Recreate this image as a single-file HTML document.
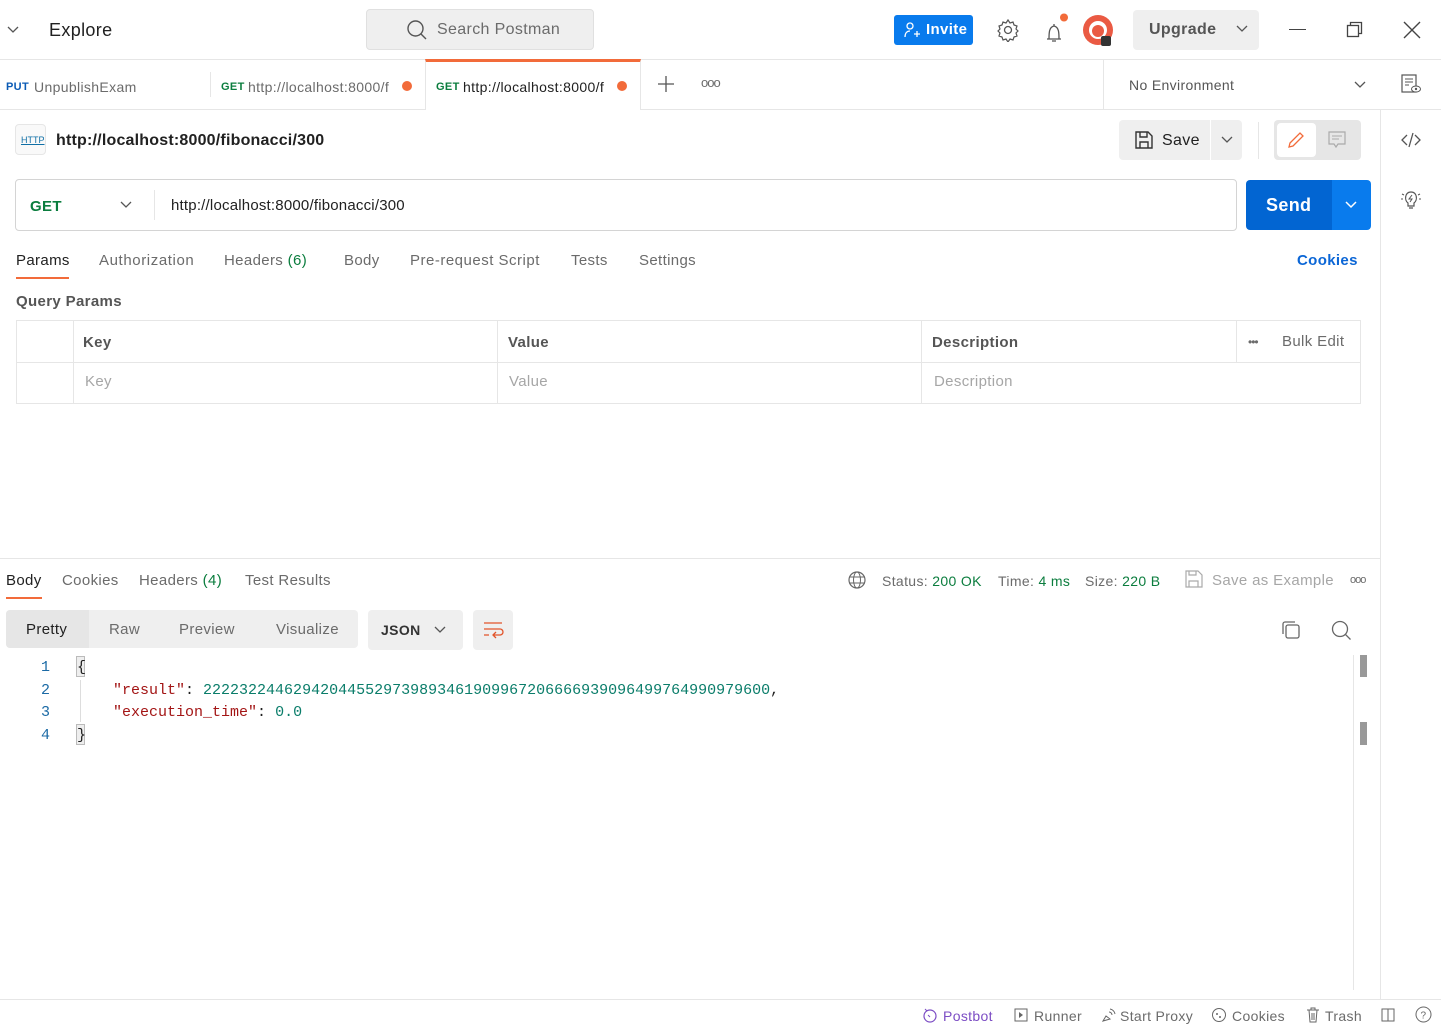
<!DOCTYPE html>
<html><head><meta charset="utf-8"><style>
*{box-sizing:border-box;margin:0;padding:0}
body{width:1441px;height:1030px;position:relative;overflow:hidden;background:#fff;font-family:"Liberation Sans",sans-serif;color:#212121;font-size:14px}
.a{position:absolute;white-space:nowrap;letter-spacing:0.35px;margin-top:1px}
.g{color:#6b6b6b}
.hl{position:absolute;height:1px;background:#e6e6e6}
.vl{position:absolute;width:1px;background:#e6e6e6}
svg{position:absolute}
.mono{font-family:"Liberation Mono",monospace;font-size:15px;letter-spacing:0}
</style></head><body>
<!-- top bar -->
<svg style="left:6px;top:24px" width="14" height="10"><path d="M2 3l5 5 5-5" stroke="#555" fill="none" stroke-width="1.3"/></svg>
<div class="a" style="left:49px;top:19px;font-size:18px;color:#212121">Explore</div>
<div class="a" style="left:366px;top:9px;width:228px;height:41px;background:#efefef;border:1px solid #e0e0e0;border-radius:4px;margin-top:0"></div>
<svg style="left:406px;top:19px" width="22" height="22"><circle cx="9.5" cy="9.5" r="7.5" stroke="#555" fill="none" stroke-width="1.4"/><path d="M15 15l5 5" stroke="#555" stroke-width="1.4"/></svg>
<div class="a g" style="left:437px;top:20px;font-size:16px">Search Postman</div>
<div class="a" style="left:894px;top:15px;width:79px;height:30px;background:#097bed;border-radius:3px;color:#fff;font-weight:bold;font-size:15px;padding:6px 0 0 32px;margin-top:0">Invite</div>
<svg style="left:903px;top:21px" width="18" height="18"><circle cx="7" cy="5" r="3" stroke="#fff" fill="none" stroke-width="1.3"/><path d="M2 16c0-4 2-6 5-6M11 13h6M14 10v6" stroke="#fff" fill="none" stroke-width="1.3"/></svg>
<svg style="left:996px;top:18px" width="24" height="24"><circle cx="12" cy="12" r="3.5" stroke="#555" fill="none" stroke-width="1.3"/><path d="M12 2l2 3 3-1 1 3 3 1-1 3 2 2-2 2 1 3-3 1-1 3-3-1-2 3-2-3-3 1-1-3-3-1 1-3-2-2 2-2-1-3 3-1 1-3 3 1z" stroke="#555" fill="none" stroke-width="1.2"/></svg>
<svg style="left:1042px;top:12px" width="30" height="30"><path d="M5 27h14M7 27c0-6 0-12 5-13 5 1 5 7 5 13M12 14v-2M10 29h4" stroke="#555" fill="none" stroke-width="1.3"/><circle cx="22" cy="5.5" r="4" fill="#f26b3a"/></svg>
<svg style="left:1082px;top:14px" width="32" height="32"><circle cx="16" cy="16" r="15" fill="#ea5a43"/><circle cx="16" cy="16" r="9" fill="#fff"/><circle cx="16" cy="17" r="6" fill="#ea5a43"/><rect x="19" y="22" width="10" height="10" rx="2" fill="#333"/></svg>
<div class="a" style="left:1133px;top:10px;width:126px;height:40px;background:#efefef;border-radius:4px;margin-top:0"></div>
<div class="a" style="left:1149px;top:20px;font-size:16px;font-weight:bold;color:#555">Upgrade</div>
<svg style="left:1235px;top:24px" width="14" height="10"><path d="M2 2l5 5 5-5" stroke="#555" fill="none" stroke-width="1.3"/></svg>
<div class="a" style="left:1289px;top:29px;width:17px;height:1px;background:#444;margin-top:0"></div>
<svg style="left:1346px;top:21px" width="18" height="18"><rect x="1.5" y="4.5" width="11" height="11" stroke="#444" fill="none" stroke-width="1.3"/><path d="M4.5 4.5v-3h11v11h-3" stroke="#444" fill="none" stroke-width="1.3"/></svg>
<svg style="left:1402px;top:20px" width="20" height="20"><path d="M2 2l16 16M18 2L2 18" stroke="#444" stroke-width="1.4"/></svg>
<div class="hl" style="left:0;top:59px;width:1441px"></div>
<!-- tabs -->
<div class="a" style="left:6px;top:80px;font-size:11px;font-weight:bold;color:#0b5bb5">PUT</div>
<div class="a g" style="left:34px;top:78px;font-size:14px">UnpublishExam</div>
<div class="vl" style="left:210px;top:72px;height:25px"></div>
<div class="a" style="left:221px;top:80px;font-size:11px;font-weight:bold;color:#0b7d3e">GET</div>
<div class="a g" style="left:248px;top:78px;font-size:14px">http://localhost:8000/f</div>
<div class="a" style="left:402px;top:81px;width:10px;height:10px;border-radius:5px;background:#f26b3a;margin-top:0"></div>
<div class="a" style="left:425px;top:59px;width:216px;height:51px;background:#fff;border-left:1px solid #e6e6e6;border-right:1px solid #e6e6e6;border-top:3px solid #f26b3a;z-index:1;margin-top:0"></div>
<div class="a" style="left:436px;top:80px;font-size:11px;font-weight:bold;color:#0b7d3e;z-index:2">GET</div>
<div class="a" style="left:463px;top:78px;font-size:14px;z-index:2">http://localhost:8000/f</div>
<div class="a" style="left:617px;top:81px;width:10px;height:10px;border-radius:5px;background:#f26b3a;z-index:2;margin-top:0"></div>
<svg style="left:656px;top:74px" width="20" height="20"><path d="M10 2v16M2 10h16" stroke="#555" stroke-width="1.3"/></svg>
<div class="a g" style="left:701px;top:74px;font-size:13px;letter-spacing:-1px">ooo</div>
<div class="vl" style="left:1103px;top:60px;height:50px"></div>
<div class="a" style="left:1129px;top:76px;font-size:14px;color:#555">No Environment</div>
<svg style="left:1353px;top:80px" width="14" height="10"><path d="M2 2l5 5 5-5" stroke="#555" fill="none" stroke-width="1.3"/></svg>
<svg style="left:1400px;top:73px" width="22" height="22"><rect x="2" y="2" width="14" height="17" stroke="#555" fill="none" stroke-width="1.2"/><path d="M5 6h8M5 9h8M5 12h4" stroke="#555"/><ellipse cx="16" cy="16" rx="4.5" ry="3" fill="#fff" stroke="#555"/><circle cx="16" cy="16" r="1.2" fill="#555"/></svg>
<div class="hl" style="left:0;top:109px;width:1441px"></div>
<div class="vl" style="left:1380px;top:110px;height:889px"></div>
<!-- request title -->
<div class="a" style="left:15px;top:124px;width:31px;height:31px;border:1px solid #e6e6e6;border-radius:4px;background:#f9f9f9;margin-top:0"></div>
<div class="a" style="left:21px;top:134px;font-size:9px;color:#0f6fa6;text-decoration:underline;letter-spacing:0">HTTP</div>
<div class="a" style="left:56px;top:131px;font-size:16px;font-weight:bold;letter-spacing:0.2px">http://localhost:8000/fibonacci/300</div>
<div class="a" style="left:1119px;top:120px;width:91px;height:40px;background:#efefef;border-radius:4px 0 0 4px;margin-top:0"></div>
<div class="a" style="left:1211px;top:120px;width:31px;height:40px;background:#efefef;border-radius:0 4px 4px 0;margin-top:0"></div>
<svg style="left:1133px;top:129px" width="22" height="22"><path d="M3 3h12l4 4v12H3z" stroke="#333" fill="none" stroke-width="1.4"/><path d="M7 3v5h7V3M7 19v-6h8v6" stroke="#333" fill="none" stroke-width="1.4"/></svg>
<div class="a" style="left:1162px;top:131px;font-size:16px">Save</div>
<svg style="left:1220px;top:135px" width="14" height="10"><path d="M2 2l5 5 5-5" stroke="#555" fill="none" stroke-width="1.3"/></svg>
<div class="vl" style="left:1258px;top:122px;height:37px"></div>
<div class="a" style="left:1274px;top:120px;width:87px;height:40px;background:#e6e6e6;border-radius:4px;margin-top:0"></div>
<div class="a" style="left:1277px;top:123px;width:39px;height:34px;background:#fff;border-radius:4px;margin-top:0"></div>
<svg style="left:1286px;top:130px" width="20" height="20"><path d="M3 17l1-4L14 3l3 3L7 16z" stroke="#f26b3a" fill="none" stroke-width="1.3"/></svg>
<svg style="left:1327px;top:130px" width="20" height="20"><path d="M2 2h16v12h-7l-2 3-2-3H2z" stroke="#aaa" fill="none" stroke-width="1.2"/><path d="M5 6h10M5 9h7" stroke="#aaa"/></svg>
<svg style="left:1400px;top:130px" width="22" height="20"><path d="M7 5l-5 5 5 5M15 5l5 5-5 5M13 3l-4 14" stroke="#555" fill="none" stroke-width="1.3"/></svg>
<svg style="left:1399px;top:187px" width="24" height="24"><path d="M9 16c-4-3-3-11 3-11s7 8 3 11v3H9zM10 21h4" stroke="#555" fill="none" stroke-width="1.2"/><path d="M13 8l-3 4h3l-2 3" stroke="#555" fill="none"/><path d="M3 7l2 1M2 12h2M21 7l-2 1M22 12h-2" stroke="#555"/></svg>
<!-- url bar -->
<div class="a" style="left:15px;top:179px;width:1222px;height:52px;border:1px solid #d4d4d4;border-radius:4px;margin-top:0"></div>
<div class="a" style="left:30px;top:197px;font-size:15px;font-weight:bold;color:#0b7d3e">GET</div>
<svg style="left:119px;top:200px" width="14" height="10"><path d="M2 2l5 5 5-5" stroke="#555" fill="none" stroke-width="1.3"/></svg>
<div class="vl" style="left:154px;top:190px;height:30px"></div>
<div class="a" style="left:171px;top:196px;font-size:15px;letter-spacing:0.2px">http://localhost:8000/fibonacci/300</div>
<div class="a" style="left:1246px;top:180px;width:86px;height:50px;background:#0265d2;border-radius:4px 0 0 4px;color:#fff;font-weight:bold;font-size:18px;padding:15px 0 0 20px;margin-top:0">Send</div>
<div class="a" style="left:1332px;top:180px;width:39px;height:50px;background:#097bed;border-radius:0 4px 4px 0;margin-top:0"></div>
<svg style="left:1344px;top:200px" width="14" height="10"><path d="M2 2l5 5 5-5" stroke="#fff" fill="none" stroke-width="1.5"/></svg>
<!-- req tabs -->
<div class="a" style="left:16px;top:251px;font-size:15px">Params</div>
<div class="a" style="left:16px;top:276px;width:53px;height:2px;background:#f26b3a"></div>
<div class="a g" style="left:99px;top:251px;font-size:15px;letter-spacing:0.6px">Authorization</div>
<div class="a g" style="left:224px;top:251px;font-size:15px">Headers <span style="color:#0b7d3e">(6)</span></div>
<div class="a g" style="left:344px;top:251px;font-size:15px">Body</div>
<div class="a g" style="left:410px;top:251px;font-size:15px;letter-spacing:0.5px">Pre-request Script</div>
<div class="a g" style="left:571px;top:251px;font-size:15px">Tests</div>
<div class="a g" style="left:639px;top:251px;font-size:15px">Settings</div>
<div class="a" style="left:1297px;top:251px;font-size:15px;font-weight:bold;color:#0b66d6">Cookies</div>
<div class="a" style="left:16px;top:292px;font-size:15px;font-weight:bold;color:#555">Query Params</div>
<!-- table -->
<div class="a" style="left:16px;top:320px;width:1345px;height:84px;border:1px solid #e6e6e6;margin-top:0"></div>
<div class="hl" style="left:16px;top:362px;width:1345px"></div>
<div class="vl" style="left:73px;top:320px;height:84px"></div>
<div class="vl" style="left:497px;top:320px;height:84px"></div>
<div class="vl" style="left:921px;top:320px;height:84px"></div>
<div class="vl" style="left:1236px;top:320px;height:42px"></div>
<div class="a" style="left:83px;top:333px;font-size:15px;font-weight:bold;color:#555">Key</div>
<div class="a" style="left:508px;top:333px;font-size:15px;font-weight:bold;color:#555">Value</div>
<div class="a" style="left:932px;top:333px;font-size:15px;font-weight:bold;color:#555">Description</div>
<div class="a g" style="left:1248px;top:334px;font-size:12px;letter-spacing:-1px">•••</div>
<div class="a g" style="left:1282px;top:332px;font-size:15px">Bulk Edit</div>
<div class="a" style="left:85px;top:372px;font-size:15px;color:#a6a6a6">Key</div>
<div class="a" style="left:509px;top:372px;font-size:15px;color:#a6a6a6">Value</div>
<div class="a" style="left:934px;top:372px;font-size:15px;color:#a6a6a6">Description</div>
<!-- response -->
<div class="hl" style="left:0;top:558px;width:1380px"></div>
<div class="a" style="left:6px;top:571px;font-size:15px">Body</div>
<div class="a" style="left:6px;top:597px;width:36px;height:2px;background:#f26b3a;margin-top:0"></div>
<div class="a g" style="left:62px;top:571px;font-size:15px">Cookies</div>
<div class="a g" style="left:139px;top:571px;font-size:15px">Headers <span style="color:#0b7d3e">(4)</span></div>
<div class="a g" style="left:245px;top:571px;font-size:15px">Test Results</div>
<svg style="left:847px;top:570px" width="20" height="20"><circle cx="10" cy="10" r="8" stroke="#666" fill="none" stroke-width="1.2"/><ellipse cx="10" cy="10" rx="3.5" ry="8" stroke="#666" fill="none"/><path d="M2 7h16M2 13h16" stroke="#666"/></svg>
<div class="a g" style="left:882px;top:572px;font-size:14px">Status: <span style="color:#0b7d3e">200 OK</span></div>
<div class="a g" style="left:998px;top:572px;font-size:14px">Time: <span style="color:#0b7d3e">4 ms</span></div>
<div class="a g" style="left:1085px;top:572px;font-size:14px">Size: <span style="color:#0b7d3e">220 B</span></div>
<svg style="left:1184px;top:569px" width="20" height="20"><path d="M2 2h12l4 4v12H2z" stroke="#aaa" fill="none" stroke-width="1.2"/><path d="M5 2v4h7V2M5 18v-6h9v6" stroke="#aaa" fill="none" stroke-width="1.2"/></svg>
<div class="a" style="left:1212px;top:571px;font-size:15px;color:#a6a6a6">Save as Example</div>
<div class="a g" style="left:1350px;top:573px;font-size:11px;letter-spacing:-1px">ooo</div>
<div class="a" style="left:6px;top:610px;width:352px;height:38px;background:#efefef;border-radius:4px;margin-top:0"></div>
<div class="a" style="left:6px;top:610px;width:83px;height:38px;background:#e6e6e6;border-radius:4px 0 0 4px;margin-top:0"></div>
<div class="a" style="left:26px;top:620px;font-size:15px">Pretty</div>
<div class="a g" style="left:109px;top:620px;font-size:15px">Raw</div>
<div class="a g" style="left:179px;top:620px;font-size:15px">Preview</div>
<div class="a g" style="left:276px;top:620px;font-size:15px">Visualize</div>
<div class="a" style="left:368px;top:610px;width:95px;height:40px;background:#efefef;border-radius:4px;margin-top:0"></div>
<div class="a" style="left:381px;top:621px;font-size:14px;font-weight:bold;color:#333">JSON</div>
<svg style="left:433px;top:625px" width="14" height="10"><path d="M2 2l5 5 5-5" stroke="#555" fill="none" stroke-width="1.3"/></svg>
<div class="a" style="left:473px;top:610px;width:40px;height:40px;background:#efefef;border-radius:4px;margin-top:0"></div>
<svg style="left:482px;top:619px" width="22" height="22"><path d="M2 4h18M2 10h16a3 3 0 010 6h-6M14 13l-3 3 3 3M2 16h5" stroke="#e2542a" fill="none" stroke-width="1.3"/></svg>
<svg style="left:1280px;top:619px" width="22" height="22"><rect x="6" y="6" width="13" height="13" rx="2" stroke="#666" fill="none" stroke-width="1.3"/><path d="M3 15V5a2 2 0 012-2h10" stroke="#666" fill="none" stroke-width="1.3"/></svg>
<svg style="left:1330px;top:619px" width="22" height="22"><circle cx="10" cy="10" r="7.5" stroke="#666" fill="none" stroke-width="1.3"/><path d="M15.5 15.5l5 5" stroke="#666" stroke-width="1.3"/></svg>
<!-- code -->
<div class="a mono" style="left:41px;top:657px;color:#1b6aa5;line-height:22.7px;margin-top:0">1<br>2<br>3<br>4</div>
<div class="a" style="left:76px;top:656px;width:9px;height:21px;border:1px solid #bbb;background:#eee;margin-top:0"></div>
<div class="a" style="left:76px;top:724px;width:9px;height:21px;border:1px solid #bbb;background:#eee;margin-top:0"></div>
<div class="vl" style="left:80px;top:680px;height:42px;background:#ddd"></div>
<div class="a mono" style="left:77px;top:657px;line-height:22.7px;color:#212121;margin-top:0">{<br>&nbsp;&nbsp;&nbsp;&nbsp;<span style="color:#a31515">"result"</span>: <span style="color:#0a7d6a">222232244629420445529739893461909967206666939096499764990979600</span>,<br>&nbsp;&nbsp;&nbsp;&nbsp;<span style="color:#a31515">"execution_time"</span>: <span style="color:#0a7d6a">0.0</span><br>}</div>
<div class="vl" style="left:1353px;top:655px;height:335px"></div>
<div class="a" style="left:1360px;top:655px;width:7px;height:22px;background:#999;margin-top:0"></div>
<div class="a" style="left:1360px;top:722px;width:7px;height:23px;background:#999;margin-top:0"></div>
<!-- footer -->
<div class="hl" style="left:0;top:999px;width:1441px"></div>
<svg style="left:922px;top:1007px" width="16" height="16"><circle cx="8" cy="9" r="6" stroke="#7c4dc4" fill="none" stroke-width="1.2"/><path d="M6 8l2 2M3 2l2 2" stroke="#7c4dc4"/></svg>
<div class="a" style="left:943px;top:1007px;font-size:14px;color:#7c4dc4">Postbot</div>
<svg style="left:1014px;top:1008px" width="14" height="14"><rect x="1" y="1" width="12" height="12" stroke="#666" fill="none"/><path d="M5 4l4 3-4 3z" fill="#666"/></svg>
<div class="a g" style="left:1034px;top:1007px;font-size:14px">Runner</div>
<svg style="left:1100px;top:1007px" width="16" height="16"><path d="M3 14l3-5 4 3zM9 5a3 3 0 013 3M10 2a6 6 0 015 5" stroke="#666" fill="none"/></svg>
<div class="a g" style="left:1120px;top:1007px;font-size:14px">Start Proxy</div>
<svg style="left:1211px;top:1007px" width="16" height="16"><circle cx="8" cy="8" r="6.5" stroke="#666" fill="none"/><circle cx="6" cy="7" r="1" fill="#666"/><circle cx="9" cy="10" r="1" fill="#666"/></svg>
<div class="a g" style="left:1232px;top:1007px;font-size:14px">Cookies</div>
<svg style="left:1306px;top:1007px" width="14" height="16"><path d="M1 3h12M5 3V1h4v2M3 3l1 12h6l1-12M6 6v7M8 6v7" stroke="#666" fill="none"/></svg>
<div class="a g" style="left:1325px;top:1007px;font-size:14px">Trash</div>
<svg style="left:1381px;top:1008px" width="14" height="14"><rect x="1" y="1" width="12" height="12" stroke="#666" fill="none"/><path d="M7 1v12" stroke="#666"/></svg>
<svg style="left:1415px;top:1006px" width="17" height="17"><circle cx="8.5" cy="8.5" r="7.5" stroke="#666" fill="none"/><text x="5.5" y="12.5" font-size="10" fill="#666" font-family="Liberation Sans">?</text></svg>
</body></html>
